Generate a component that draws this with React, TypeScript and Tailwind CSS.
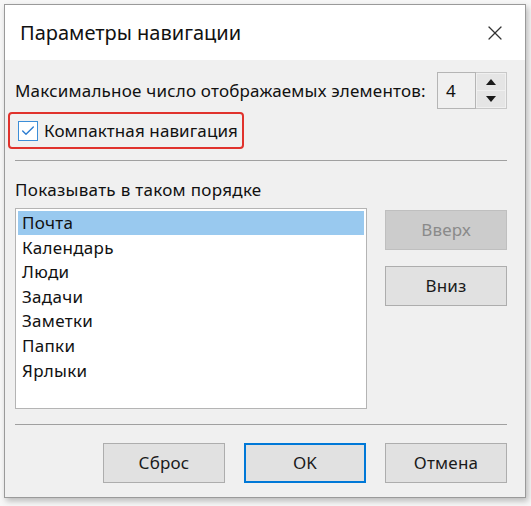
import { X, Check } from "lucide-react";

const items = ["Почта", "Календарь", "Люди", "Задачи", "Заметки", "Папки", "Ярлыки"];

function DialogButton({
  label,
  disabled,
  primary,
}: {
  label: string;
  disabled?: boolean;
  primary?: boolean;
}) {
  const base = "w-[122px] h-[40px] flex items-center justify-center text-[17px] tracking-[0.2px]";
  if (disabled) {
    return <div className={`${base} bg-[#cccccc] border border-[#bfbfbf] text-[#8a8a8a]`}>{label}</div>;
  }
  if (primary) {
    return <div className={`${base} bg-[#e1e1e1] border-2 border-[#0078d7] text-[#1a1a1a]`}>{label}</div>;
  }
  return <div className={`${base} bg-[#e1e1e1] border border-[#adadad] text-[#1a1a1a]`}>{label}</div>;
}

export default function App() {
  return (
    <div className="w-[531px] h-[506px] bg-[#f7f7f7] pl-[4px] pt-[4px]" style={{ fontFamily: '"Noto Sans", "Open Sans", sans-serif' }}>
      <div className="w-[522px] h-[494px] border border-[#9a9a9a] bg-[#f0f0f0] shadow-[2px_3px_6px_rgba(0,0,0,0.25)] flex flex-col">
        {/* title bar */}
        <div className="h-[55px] bg-white flex items-center justify-between pl-[15px] pr-[18px]">
          <span className="text-[20px] text-[#111]">Параметры навигации</span>
          <X className="w-[24px] h-[24px] text-[#333]" strokeWidth={1.2} />
        </div>

        <div className="flex flex-col pl-[10px] pr-[18px] pt-[12px] text-[#111]">
          <div className="flex items-center justify-between">
            <span className="text-[17px] tracking-[0.2px] whitespace-nowrap">Максимальное число отображаемых элементов:</span>
            <div className="flex shrink-0 h-[37px] w-[70px]">
              <div className="w-[39px] border border-[#b5b5b5] flex items-center pl-[8px] text-[17px]">4</div>
              <div className="w-[31px] flex flex-col gap-[1px] p-[1px] border border-l-0 border-[#c8c8c8]">
                <div className="flex-1 bg-[#e5e5e5] flex items-center justify-center">
                  <div className="w-0 h-0 border-l-[5px] border-r-[5px] border-b-[6px] border-l-transparent border-r-transparent border-b-[#1a1a1a]" />
                </div>
                <div className="flex-1 bg-[#e5e5e5] flex items-center justify-center">
                  <div className="w-0 h-0 border-l-[5px] border-r-[5px] border-t-[6px] border-l-transparent border-r-transparent border-t-[#1a1a1a]" />
                </div>
              </div>
            </div>
          </div>

          <div className="mt-[3px] -ml-[7px] w-[236px] h-[37px] border-2 border-[#e0322c] rounded-[4px] flex items-center pl-[8px] gap-[6px]">
            <div className="w-[20px] h-[20px] border border-[#3c8ed8] bg-white flex items-center justify-center">
              <Check className="w-[16px] h-[16px] text-[#2a7bd0]" strokeWidth={2} />
            </div>
            <span className="text-[17px] tracking-[0.1px] whitespace-nowrap">Компактная навигация</span>
          </div>

          <div className="mt-[11px] h-[1px] bg-[#a0a0a0]" />

          <div className="mt-[16px] text-[17px] tracking-[0.3px]">Показывать в таком порядке</div>

          <div className="mt-[5px] flex justify-between">
            <div className="w-[352px] h-[201px] bg-white border border-[#b4b4b4] p-[2px]">
              {items.map((it, i) => (
                <div
                  key={it}
                  className={`h-[24.6px] pl-[4px] flex items-center text-[17px] tracking-[0.3px] ${i === 0 ? "bg-[#99c9ef]" : ""}`}
                >
                  {it}
                </div>
              ))}
            </div>
            <div className="flex flex-col gap-[16px] pt-[2px]">
              <DialogButton label="Вверх" disabled />
              <DialogButton label="Вниз" />
            </div>
          </div>

          <div className="mt-[15px] h-[1px] bg-[#a0a0a0]" />

          <div className="mt-[18px] flex justify-end gap-[19px]">
            <DialogButton label="Сброс" />
            <DialogButton label="OK" primary />
            <DialogButton label="Отмена" />
          </div>
        </div>
      </div>
    </div>
  );
}
